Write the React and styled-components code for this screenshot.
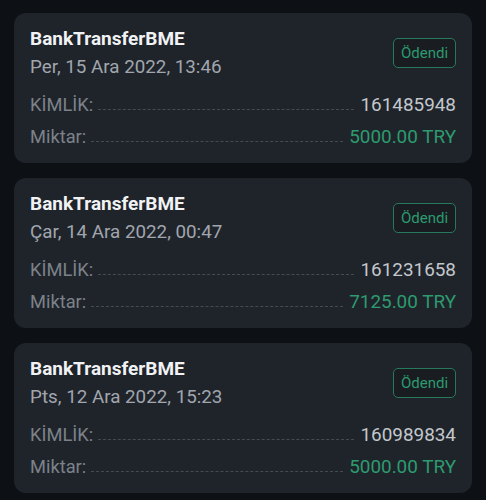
import styled, { createGlobalStyle } from 'styled-components';

const transfers = [
  { id: '161485948', date: 'Per, 15 Ara 2022, 13:46', amount: '5000.00 TRY' },
  { id: '161231658', date: 'Çar, 14 Ara 2022, 00:47', amount: '7125.00 TRY' },
  { id: '160989834', date: 'Pts, 12 Ara 2022, 15:23', amount: '5000.00 TRY' },
];

const GlobalStyle = createGlobalStyle`
  html, body {
    margin: 0;
    padding: 0;
    background: #0d1015;
  }
  body {
    font-family: Roboto, "Noto Sans", sans-serif;
  }
`;

const Row = ({ label, value, green }) => (
  <RowStyled>
    <Label>{label}</Label>
    <Leader />
    <Value $green={green}>{value}</Value>
  </RowStyled>
);

const App = () => {
  return (
    <>
      <GlobalStyle />
      <List>
        {transfers.map((item) => (
          <Card key={item.id}>
            <Header>
              <div>
                <Title>BankTransferBME</Title>
                <DateText>{item.date}</DateText>
              </div>
              <Badge>Ödendi</Badge>
            </Header>
            <Row label="KİMLİK:" value={item.id} />
            <Row label="Miktar:" value={item.amount} green />
          </Card>
        ))}
      </List>
    </>
  );
};

export default App;

const List = styled.div`
  display: flex;
  flex-direction: column;
  gap: 15px;
  padding: 13px 14px 0 14px;
  width: 486px;
  box-sizing: border-box;
`;

const Card = styled.div`
  background: #1f242b;
  border-radius: 12px;
  padding: 15px 16px 0 16px;
  height: 150px;
  box-sizing: border-box;
`;

const Header = styled.div`
  display: flex;
  justify-content: space-between;
  align-items: center;
  margin-bottom: 11px;
`;

const Title = styled.p`
  margin: 0;
  color: #f1f2f4;
  font-size: 19px;
  font-weight: 700;
  line-height: 22px;
`;

const DateText = styled.p`
  margin: 6px 0 0 0;
  color: #a1a6ae;
  font-size: 18.8px;
  font-weight: 400;
  line-height: 22px;
`;

const Badge = styled.span`
  display: flex;
  align-items: center;
  justify-content: center;
  width: 63px;
  height: 30px;
  box-sizing: border-box;
  border: 1.5px solid #27795b;
  border-radius: 5px;
  background: #191d22;
  color: #2c9a6e;
  font-size: 15px;
  line-height: 1;
`;

const RowStyled = styled.div`
  display: flex;
  align-items: baseline;
  height: 32px;
  line-height: 32px;
`;

const Label = styled.span`
  color: #7c828a;
  font-size: 18.3px;
`;

const Leader = styled.span`
  flex: 1;
  margin: 0 6px 0 5px;
  border-bottom: 1px dashed #454b53;
  transform: translateY(-1px);
`;

const Value = styled.span`
  color: ${(p) => (p.$green ? '#2d9b6f' : '#c3c7cc')};
  font-size: 18.9px;
`;
